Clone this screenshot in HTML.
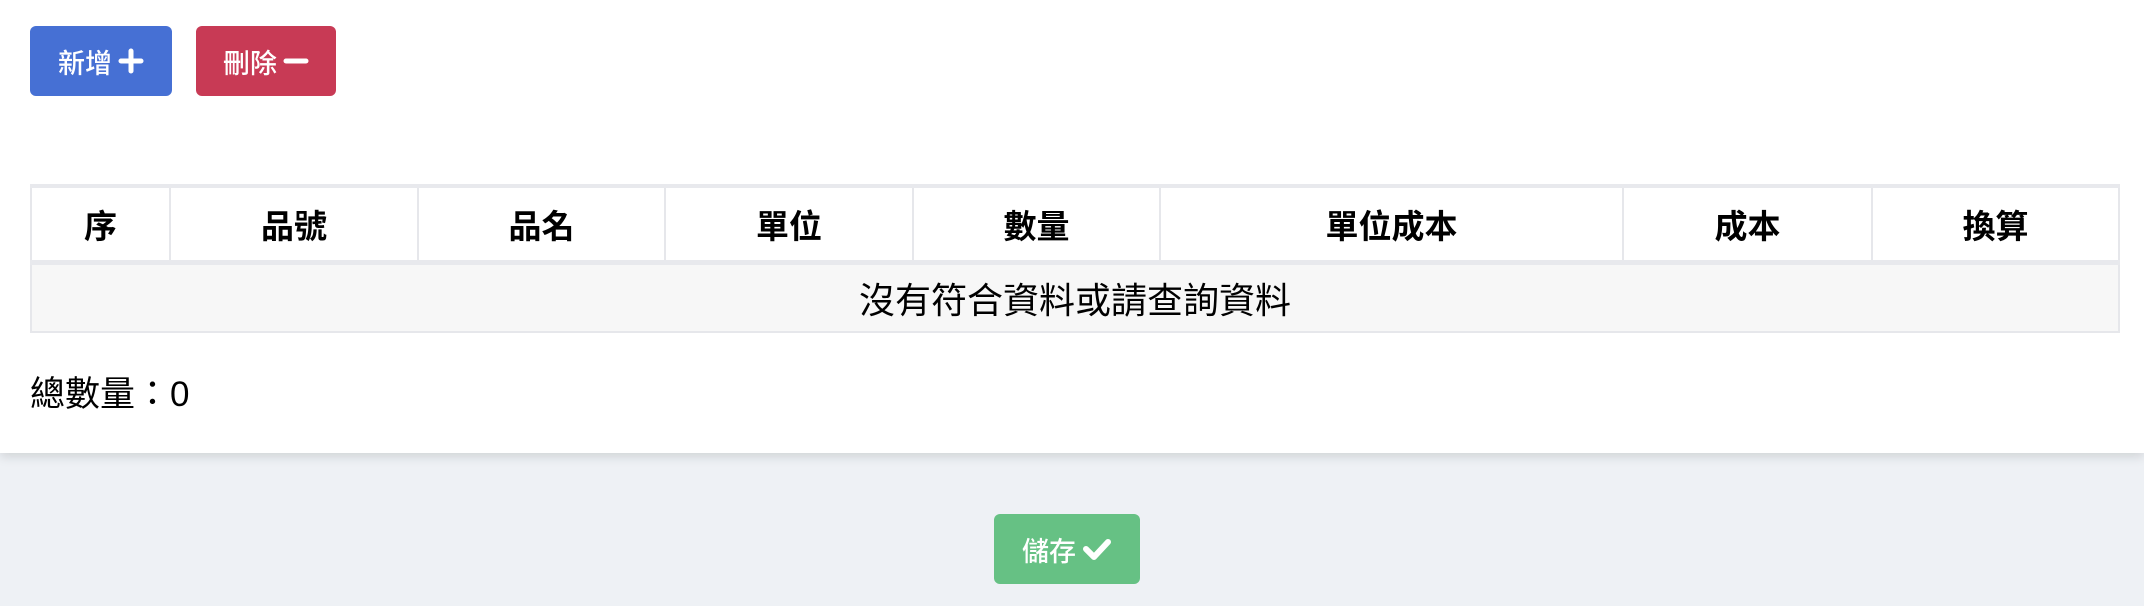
<!DOCTYPE html>
<html><head><meta charset="utf-8"><style>
*{box-sizing:border-box;margin:0;padding:0}
body{width:2144px;height:606px;background:#eef1f5;font-family:"Liberation Sans","Noto Sans CJK TC",sans-serif;position:relative;overflow:hidden}
.panel{position:absolute;left:0;top:0;width:2144px;height:453px;background:#fff;box-shadow:0 4px 10px rgba(0,0,0,.12)}
.btn{position:absolute;color:#fff;font-size:27px;font-weight:500;border-radius:6px;display:flex;align-items:center;justify-content:center;gap:6px}
table{position:absolute;left:30px;top:184px;width:2090px;border-collapse:collapse;font-size:33px}
td,th{border:2px solid #e6e7eb;text-align:center}
th{height:76px;font-weight:bold;background:#fff;border-top:4px solid #e8e9ed;border-bottom:5px solid #e8e9ed}
td{height:70px;background:#f7f7f7;font-size:36px}
.tot{position:absolute;left:30px;top:366px;font-size:35px}
</style></head><body>
<div class="panel">
<div class="btn" style="left:30px;top:26px;width:142px;height:70px;background:#4670d4">新增<svg width="26" height="26" viewBox="0 0 26 26"><path d="M13 3v20M3 13h20" stroke="#fff" stroke-width="5" stroke-linecap="round"/></svg></div>
<div class="btn" style="left:196px;top:26px;width:140px;height:70px;background:#c83a55">刪除<svg width="26" height="26" viewBox="0 0 26 26"><path d="M3 13h20" stroke="#fff" stroke-width="5" stroke-linecap="round"/></svg></div>
<table><tr>
<th style="width:139px">序</th><th style="width:248px">品號</th><th style="width:247px">品名</th><th style="width:248px">單位</th><th style="width:247px">數量</th><th style="width:463px">單位成本</th><th style="width:249px">成本</th><th>換算</th></tr>
<tr><td colspan="8">沒有符合資料或請查詢資料</td></tr></table>
<div class="tot">總數量：0</div>
</div>
<div class="btn" style="left:994px;top:514px;width:146px;height:70px;background:#66c184">儲存<svg width="30" height="26" viewBox="0 0 30 26"><path d="M4 13l8 8L26 6" fill="none" stroke="#fff" stroke-width="6" stroke-linecap="round" stroke-linejoin="round"/></svg></div>
</body></html>
